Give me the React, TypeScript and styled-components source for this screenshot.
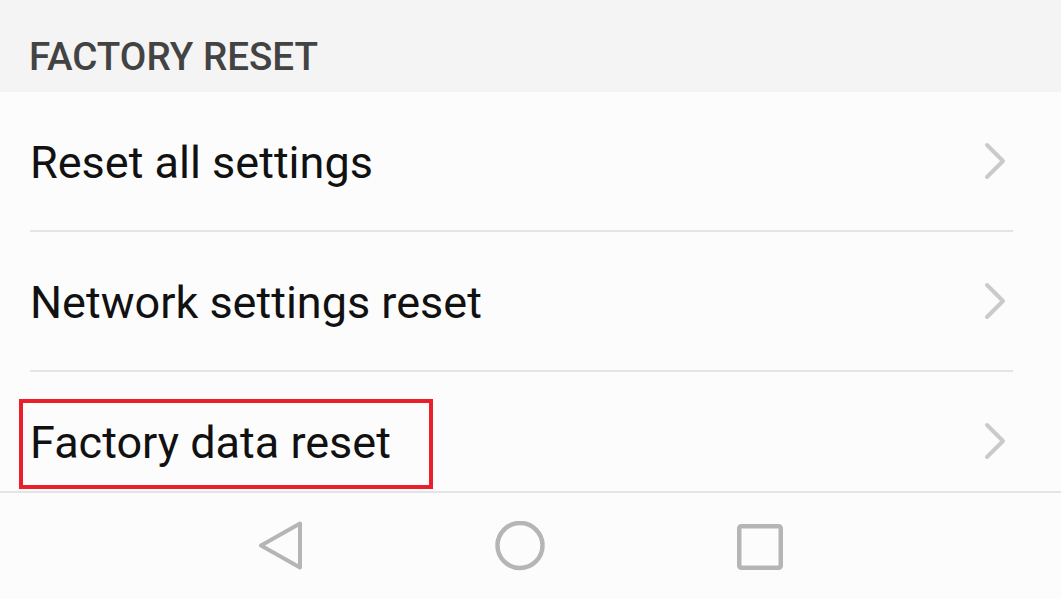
import React from "react";
import styled, { createGlobalStyle } from "styled-components";

const GlobalStyle = createGlobalStyle`
  html, body {
    margin: 0;
    padding: 0;
    background: #fcfcfc;
    font-family: Roboto, "Noto Sans", "Liberation Sans", sans-serif;
  }
`;

const Screen = styled.div`
  width: 1061px;
  height: 599px;
  display: flex;
  flex-direction: column;
  overflow: hidden;
  background: #fcfcfc;
`;

const SectionHeader = styled.div`
  height: 92px;
  box-sizing: border-box;
  flex: none;
  display: flex;
  align-items: center;
  padding: 21px 0 0 29px;
  background: #f4f4f4;
  color: #434343;
  font-size: 38.6px;
  font-weight: 500;
`;

const List = styled.div`
  flex: 1;
  overflow: hidden;
  display: flex;
  flex-direction: column;
`;

const Row = styled.div`
  flex: none;
  height: 138px;
  margin: 0 48px 0 30px;
  padding-right: 6px;
  display: flex;
  align-items: center;
  justify-content: space-between;
  border-bottom: 2px solid #e4e4e4;
`;

const Label = styled.span<{ $highlighted?: boolean }>`
  position: relative;
  top: 2px;
  font-size: 45px;
  line-height: 52px;
  color: #111;

  ${({ $highlighted }) =>
    $highlighted &&
    `
    &::after {
      content: "";
      position: absolute;
      left: -11px;
      top: calc(50% - 44px);
      width: 414px;
      height: 90px;
      box-sizing: border-box;
      border: 4px solid #ea1f2a;
    }
  `}
`;

const NavBar = styled.div`
  height: 106px;
  flex: none;
  border-top: 2px solid #e4e4e4;
  background: #fcfcfc;
  display: flex;
  align-items: center;
  justify-content: center;
  gap: 190px;
  padding-right: 21px;
`;

const NavIcon = styled.svg`
  width: 50px;
  height: 50px;
  display: block;
  fill: none;
  stroke: #b5b5b5;
  stroke-linejoin: round;
  stroke-linecap: round;
`;

const Chevron = () => (
  <svg width="24" height="40" viewBox="0 0 24 40" fill="none">
    <polyline
      points="4,4 20,20 4,36"
      stroke="#cacaca"
      strokeWidth="4"
      strokeLinecap="round"
      strokeLinejoin="round"
    />
  </svg>
);

const items = [
  { label: "Reset all settings" },
  { label: "Network settings reset" },
  { label: "Factory data reset", highlighted: true },
];

export default function App() {
  return (
    <Screen>
      <GlobalStyle />
      <SectionHeader>FACTORY RESET</SectionHeader>
      <List>
        {items.map((item) => (
          <Row key={item.label}>
            <Label $highlighted={item.highlighted}>{item.label}</Label>
            <Chevron />
          </Row>
        ))}
      </List>
      <NavBar>
        <NavIcon viewBox="0 0 50 50">
          <polygon points="45,2.5 45,46.5 6,24.5" strokeWidth="4" />
        </NavIcon>
        <NavIcon viewBox="0 0 50 50">
          <circle cx="25" cy="24.5" r="22.5" strokeWidth="4.5" />
        </NavIcon>
        <NavIcon viewBox="0 0 50 50">
          <rect x="4.25" y="5.25" width="41.5" height="41.5" rx="2" strokeWidth="4.5" />
        </NavIcon>
      </NavBar>
    </Screen>
  );
}
